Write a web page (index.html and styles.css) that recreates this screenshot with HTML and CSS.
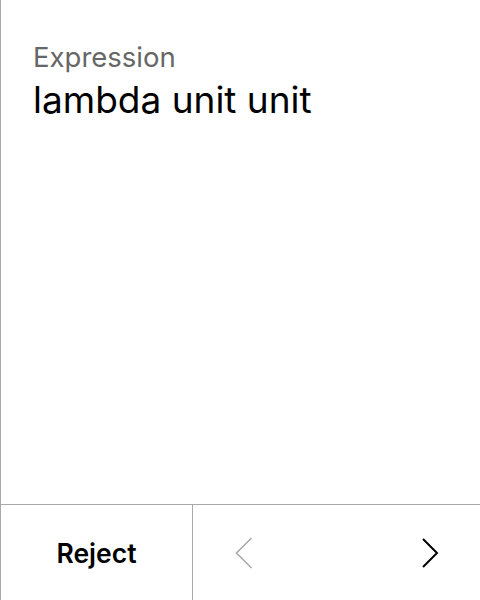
FILE: index.html
```html
<!DOCTYPE html>
<html>
<head>
<meta charset="utf-8">
<link rel="stylesheet" href="styles.css">
</head>
<body>
<div class="screen">
  <main class="content">
    <div class="label">Expression</div>
    <div class="value">lambda unit unit</div>
  </main>
  <footer class="footer">
    <button class="reject">Reject</button>
    <div class="nav">
      <button class="nav-btn prev" aria-label="Previous">
        <svg width="20" height="34" viewBox="0 0 20 34"><path d="M17.5 2 L2.5 17 L17.5 32" fill="none" stroke="#aaaaaa" stroke-width="1.6"/></svg>
      </button>
      <button class="nav-btn next" aria-label="Next">
        <svg width="20" height="34" viewBox="0 0 20 34"><path d="M3 3 L17 17 L3 31" fill="none" stroke="#000" stroke-width="2"/></svg>
      </button>
    </div>
  </footer>
</div>
</body>
</html>
```
FILE: styles.css
```css
html, body {
  margin: 0;
  padding: 0;
  background: #fff;
}
.screen {
  width: 480px;
  height: 600px;
  box-sizing: border-box;
  border-left: 1px solid #a8a8a8;
  display: flex;
  flex-direction: column;
  font-family: Inter, "Noto Sans", sans-serif;
}
.content {
  flex: 1;
  padding: 40px 0 0 32px;
}
.label {
  font-size: 27.5px;
  color: #666;
  line-height: 34px;
}
.value {
  font-size: 37px;
  font-weight: 400;
  color: #000;
  line-height: 44px;
  margin-top: 4px;
}
.footer {
  height: 96px;
  box-sizing: border-box;
  border-top: 1px solid #a8a8a8;
  display: flex;
}
.reject {
  width: 192px;
  box-sizing: border-box;
  border: none;
  border-right: 1px solid #a8a8a8;
  background: none;
  font-family: inherit;
  font-size: 26.5px;
  font-weight: 600;
  color: #000;
  padding: 0;
}
.nav {
  flex: 1;
  display: flex;
  justify-content: space-between;
  align-items: center;
  padding: 0 40px 0 41px;
}
.nav-btn {
  border: none;
  background: none;
  padding: 0;
  display: flex;
}
```
